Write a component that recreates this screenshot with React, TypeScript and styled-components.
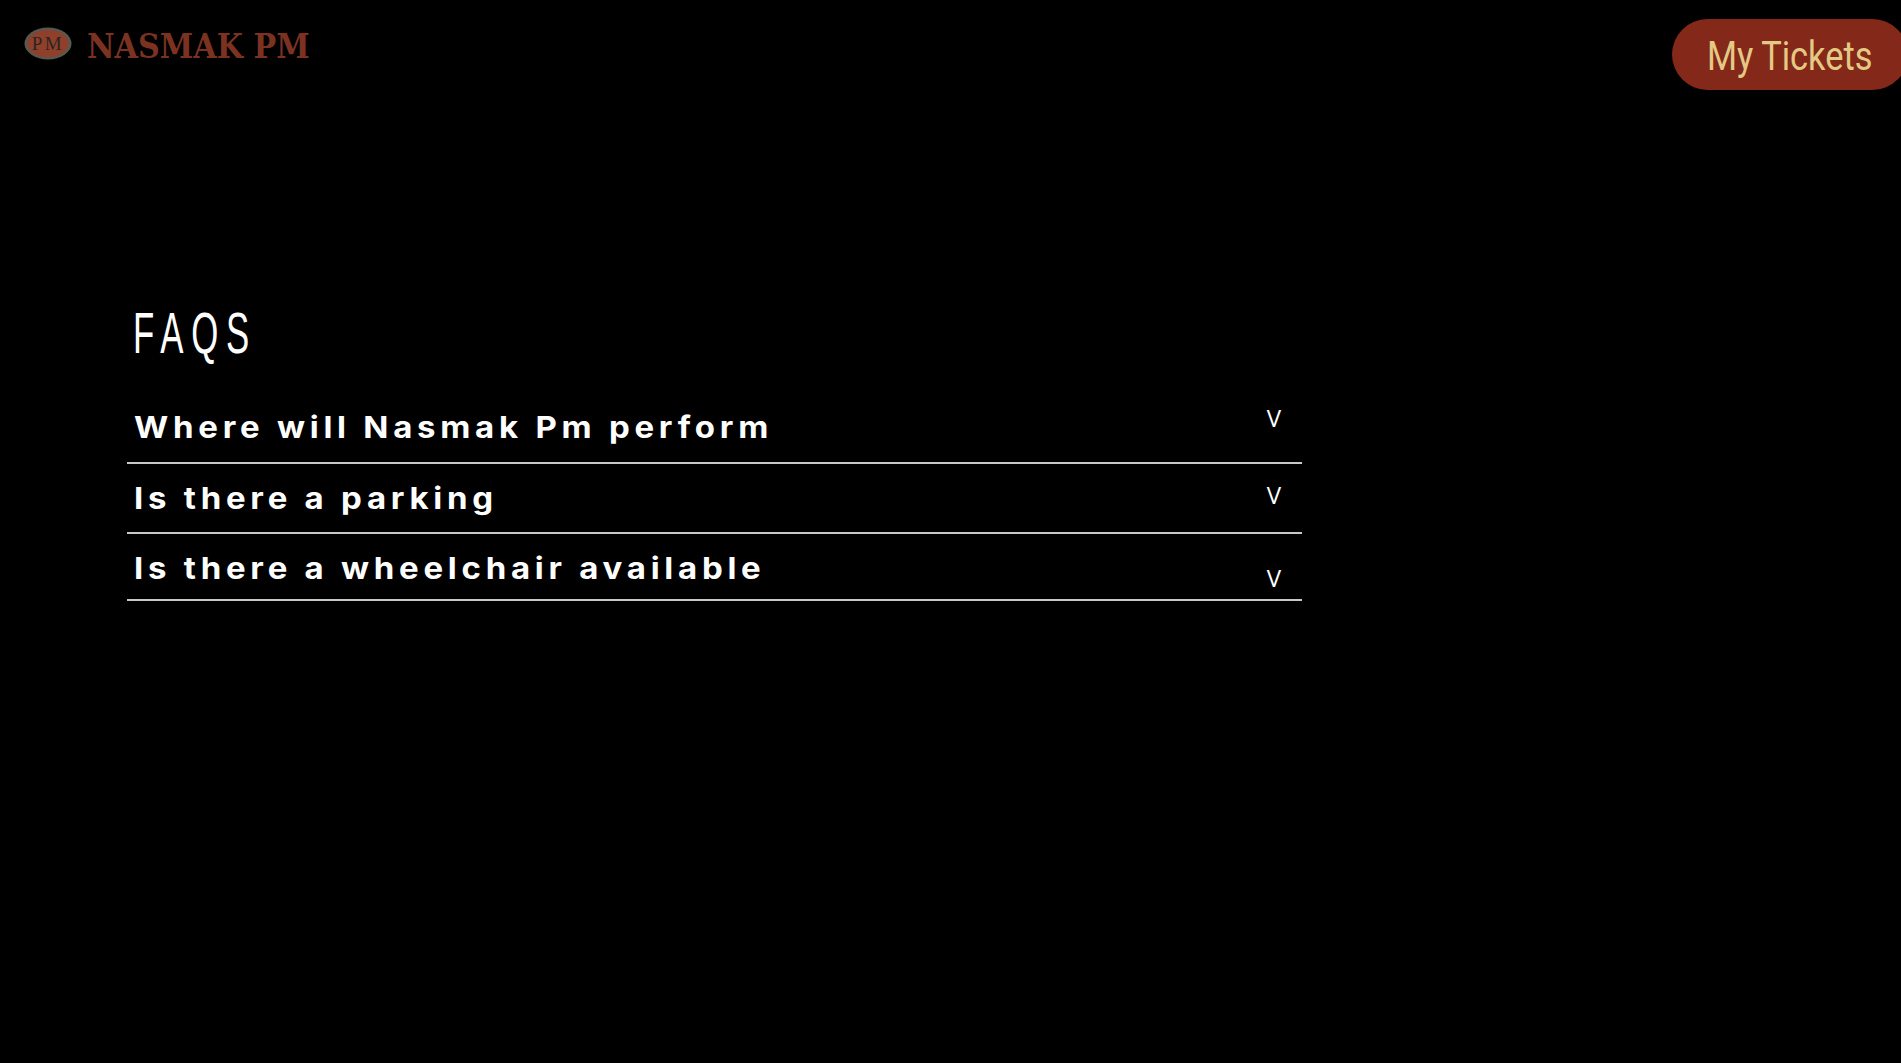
import * as React from 'react';

import styled, { createGlobalStyle } from 'styled-components';

const faqs = [
  { question: 'Where will Nasmak Pm perform', height: 71, arrowTop: -6 },
  { question: 'Is there a parking', height: 70, arrowTop: 0 },
  { question: 'Is there a wheelchair available', height: 67, arrowTop: 13 },
];

const App = () => {
  return (
    <Page>
      <GlobalStyle />
      <Header>
        <Brand>
          <Logo viewBox="0 0 48 33" aria-hidden="true">
            <ellipse cx="24" cy="16.5" rx="23.5" ry="16" fill="#5a5650" />
            <ellipse cx="24" cy="16.5" rx="20.5" ry="13.5" fill="#8f3f2a" />
            <text x="24" y="23" textAnchor="middle" fontFamily="'Liberation Serif', serif" fontSize="19" letterSpacing="2.5" fill="#2a2624">
              PM
            </text>
          </Logo>
          <BrandName>NASMAK PM</BrandName>
        </Brand>
        <TicketsButton>
          <TicketsLabel>My Tickets</TicketsLabel>
        </TicketsButton>
      </Header>
      <Main>
        <Title>
          <TitleText>FAQS</TitleText>
        </Title>
        <FaqList>
          {faqs.map((faq) => (
            <FaqRow key={faq.question} $height={faq.height}>
              <Question>{faq.question}</Question>
              <Arrow $top={faq.arrowTop}>V</Arrow>
            </FaqRow>
          ))}
        </FaqList>
      </Main>
    </Page>
  );
};

//------------STYLED------------
const GlobalStyle = createGlobalStyle`
  html, body {
    margin: 0;
    padding: 0;
    background: #000000;
  }
`;

const Page = styled.div`
  width: 100%;
  height: 1063px;
  overflow: hidden;
  background: #000000;
`;

const Header = styled.header`
  display: flex;
  justify-content: space-between;
  align-items: flex-start;
  padding: 19px 0 0 24px;
  margin-right: -7px;
`;

const Brand = styled.div`
  display: flex;
  align-items: flex-start;
  gap: 15px;
  margin-top: 8px;
`;

const Logo = styled.svg`
  width: 48px;
  height: 33px;
`;

const BrandName = styled.div`
  margin-top: 3px;
  font-family: 'DejaVu Serif', serif;
  font-weight: 700;
  font-size: 33px;
  line-height: 34px;
  color: #7c3220;
  white-space: nowrap;
  transform: scaleX(0.915);
  transform-origin: left center;
`;

const TicketsButton = styled.button`
  width: 236px;
  height: 71px;
  padding: 4px 0 0 35px;
  border: none;
  border-radius: 36px;
  background: #84281a;
  text-align: left;
`;

const TicketsLabel = styled.span`
  display: inline-block;
  color: #e3c983;
  font-family: 'Roboto', sans-serif;
  font-size: 40px;
  white-space: nowrap;
  transform: scaleX(0.86);
  transform-origin: left center;
`;

const Main = styled.main`
  width: 1175px;
  margin-left: 127px;
  padding-top: 201px;
`;

const Title = styled.h1`
  margin: 0 0 0 6px;
  height: 102px;
  font-family: 'Liberation Sans', sans-serif;
  font-weight: 400;
  font-size: 58px;
  line-height: 84px;
  letter-spacing: 13px;
  color: #ffffff;
`;

const TitleText = styled.span`
  display: inline-block;
  transform: scaleX(0.6);
  transform-origin: left center;
`;

const FaqList = styled.div`
  display: flex;
  flex-direction: column;
`;

const FaqRow = styled.div<{ $height: number }>`
  display: flex;
  justify-content: space-between;
  align-items: flex-start;
  box-sizing: border-box;
  height: ${(props) => props.$height}px;
  padding: 16px 21px 0 7px;
  border-bottom: 2px solid #c8c8c8;
`;

const Question = styled.div`
  font-family: 'Inter', sans-serif;
  font-weight: 700;
  font-size: 30px;
  line-height: 36px;
  letter-spacing: 4.3px;
  color: #ffffff;
  white-space: nowrap;
  transform: scaleX(1.1);
  transform-origin: left center;
`;

const Arrow = styled.span<{ $top: number }>`
  margin-top: ${(props) => props.$top}px;
  font-family: 'Open Sans', sans-serif;
  font-size: 24px;
  line-height: 30px;
  color: #ffffff;
`;

export default App;
